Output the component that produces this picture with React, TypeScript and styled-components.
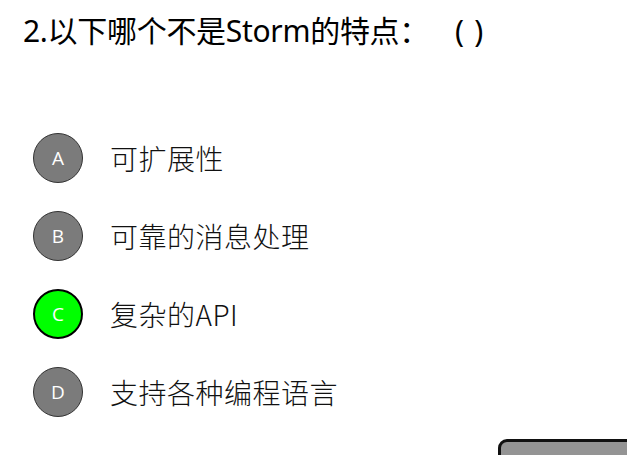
import React from "react";
import styled, { createGlobalStyle } from "styled-components";

const Global = createGlobalStyle`
  html, body {
    margin: 0;
    padding: 0;
    background: #ffffff;
    overflow: hidden;
  }
  body {
    font-family: "Noto Sans", "Noto Sans CJK SC", sans-serif;
  }
`;

const Page = styled.div`
  width: 627px;
  height: 455px;
  display: flex;
  flex-direction: column;
`;

const Title = styled.h1`
  margin: 0;
  padding: 11px 0 0 23px;
  font-family: "Noto Sans", "Noto Sans CJK SC", sans-serif;
  font-weight: 400;
  font-size: 30px;
  line-height: 40px;
  color: #000;
  letter-spacing: -0.3px;
  white-space: nowrap;
`;

const Blank = styled.span`
  margin-left: 26px;
  word-spacing: 3px;
`;

const Options = styled.ul`
  list-style: none;
  margin: 0;
  padding: 82px 0 0 33px;
  display: flex;
  flex-direction: column;
  gap: 28px;
`;

const Option = styled.li`
  display: flex;
  align-items: center;
  gap: 27px;
  height: 50px;
`;

const Badge = styled.span<{ $selected?: boolean }>`
  width: 50px;
  height: 50px;
  box-sizing: border-box;
  border-radius: 50%;
  display: flex;
  align-items: center;
  justify-content: center;
  background: ${(p) => (p.$selected ? "#00ff00" : "#7b7b7b")};
  border: ${(p) => (p.$selected ? "2px solid #000" : "1.5px solid #333")};
  color: #fff;
  font-family: "Open Sans", "Noto Sans", sans-serif;
  font-size: 19px;
  flex-shrink: 0;
`;

const Label = styled.span`
  font-family: "Noto Sans CJK SC", "Noto Sans", sans-serif;
  font-weight: 300;
  font-size: 28px;
  letter-spacing: 0.5px;
  color: #111;
  white-space: nowrap;
`;

const Footer = styled.div`
  display: flex;
  justify-content: flex-end;
  margin-top: 22px;
  margin-right: -21px;
`;

const SubmitButton = styled.button`
  width: 150px;
  height: 48px;
  box-sizing: border-box;
  border: 3px solid #111;
  border-radius: 9px;
  background: #949494;
  color: #fff;
  font-family: "Noto Sans CJK SC", sans-serif;
  font-size: 18px;
  padding: 0;
`;

const options = [
  { key: "A", text: "可扩展性" },
  { key: "B", text: "可靠的消息处理" },
  { key: "C", text: "复杂的API", selected: true },
  { key: "D", text: "支持各种编程语言" },
];

export default function App() {
  return (
    <>
      <Global />
      <Page>
        <Title>
          2.以下哪个不是Storm的特点：<Blank>( )</Blank>
        </Title>
        <Options>
          {options.map((o) => (
            <Option key={o.key}>
              <Badge $selected={o.selected}>{o.key}</Badge>
              <Label>{o.text}</Label>
            </Option>
          ))}
        </Options>
        <Footer>
          <SubmitButton>提交</SubmitButton>
        </Footer>
      </Page>
    </>
  );
}
